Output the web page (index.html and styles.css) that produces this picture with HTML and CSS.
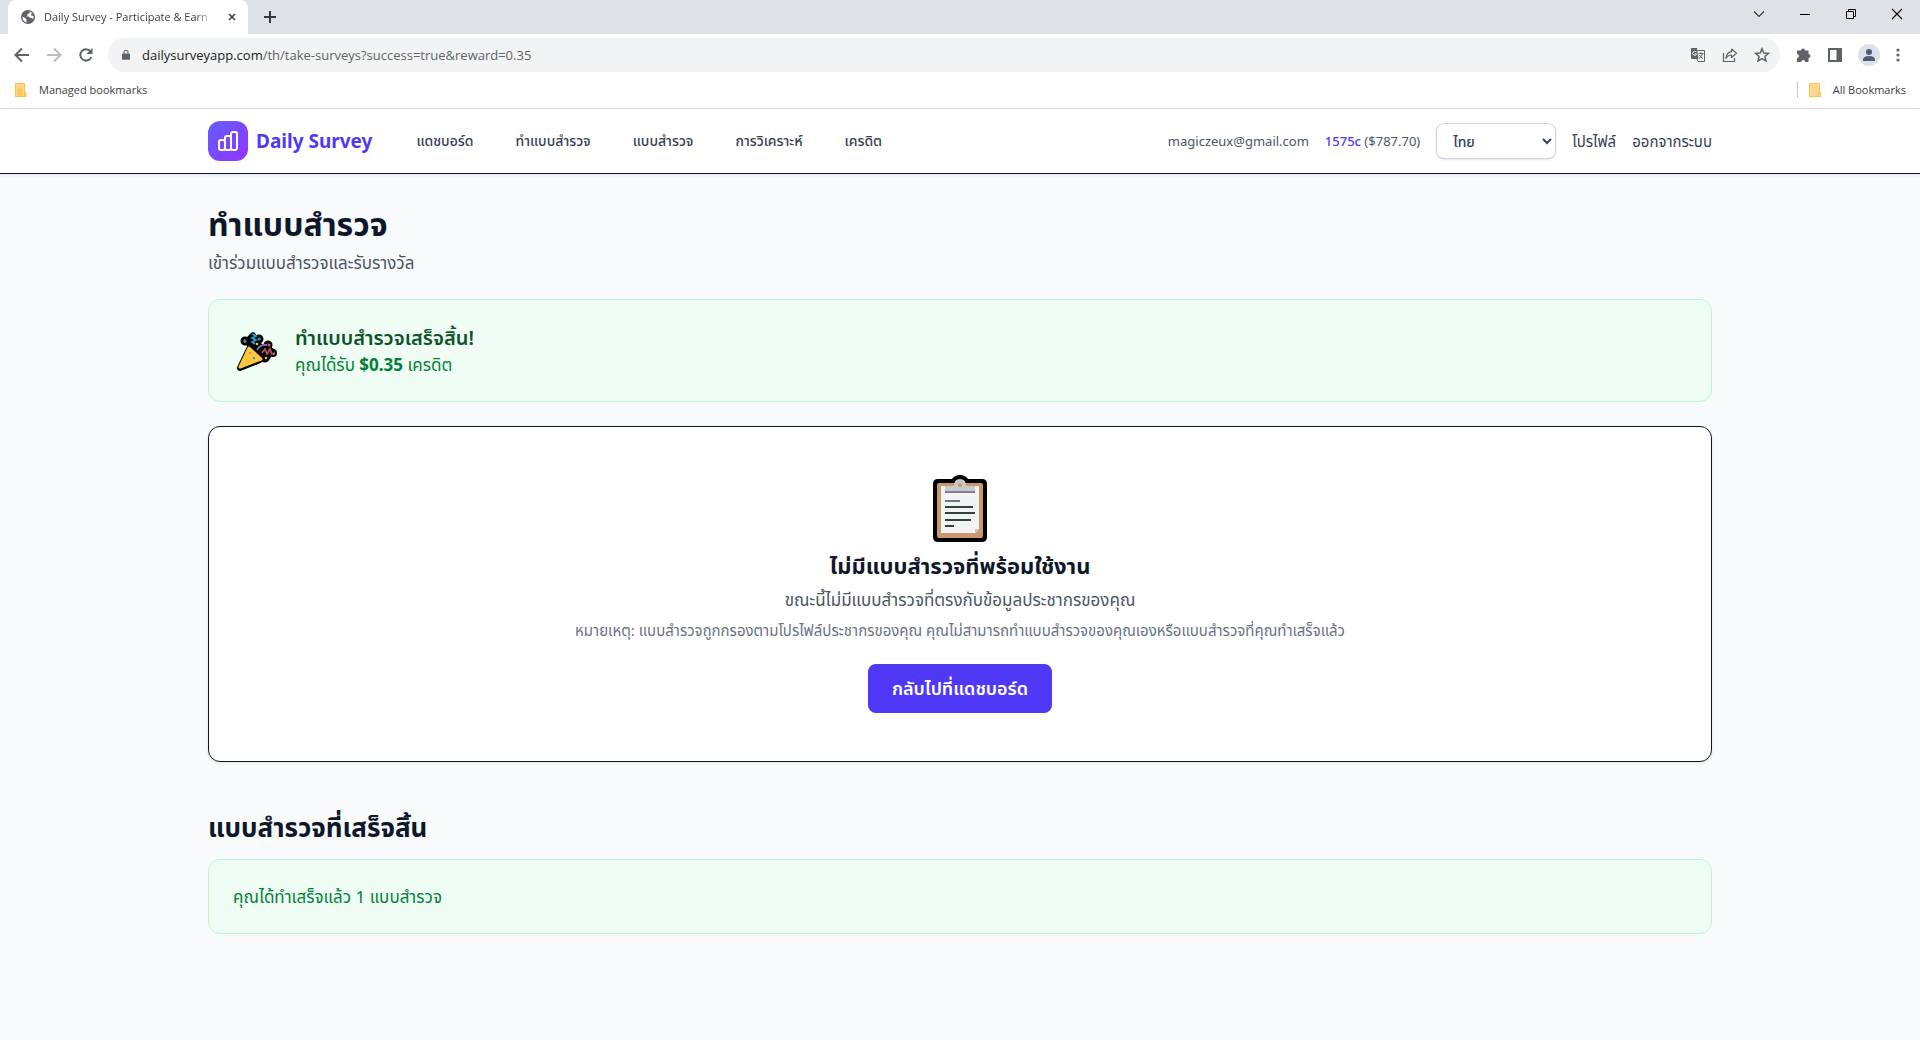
FILE: index.html
```html
<!DOCTYPE html>
<html lang="th">
  <head>
    <meta charset="UTF-8" />
    <meta name="viewport" content="width=device-width, initial-scale=1.0" />
    <title>Daily Survey - Participate &amp; Earn</title>
    <link rel="stylesheet" href="styles.css">
  </head>
  <body>
    <div class="browser" lang="en">
      <div class="tab-strip">
        <div class="tab">
          <svg class="tab-icon" viewBox="0 0 14 14">
            <circle cx="7" cy="7" r="7" fill="#5f6368" />
            <path d="M1.5 6.5 L5.5 9 L5.5 12.6 A6 6 0 0 1 1.5 6.5 Z M6 1.5 L8.8 1.6 L8.5 3.2 L6.6 4 L6.6 5.6 L4.8 6.2 L7.6 6.4 L9.2 8 L11.2 8 L12 9.5 A5.6 5.6 0 0 0 12.5 6 L10 5.5 L10.5 3.5 L12 4.5 A5.6 5.6 0 0 0 6 1.5 Z" fill="#fff" />
          </svg>
          <span class="tab-title">Daily Survey - Participate &amp; Earn</span>
          <button class="icon-btn tab-close" aria-label="Close tab">
            <svg width="8" height="8" viewBox="0 0 8 8"><path d="M1 1 L7 7 M7 1 L1 7" stroke="#3c4043" stroke-width="1.6" /></svg>
          </button>
        </div>
        <button class="icon-btn new-tab" aria-label="New tab">
          <svg width="12" height="12" viewBox="0 0 12 12"><path d="M6 0 V12 M0 6 H12" stroke="#2f3b3c" stroke-width="2" /></svg>
        </button>
        <div class="window-controls">
          <button class="icon-btn" aria-label="Search tabs">
            <svg width="12" height="12" viewBox="0 0 12 12"><path d="M1 3.5 L6 8.5 L11 3.5" fill="none" stroke="#333" stroke-width="1.1" /></svg>
          </button>
          <button class="icon-btn" aria-label="Minimize">
            <svg width="12" height="12" viewBox="0 0 12 12"><path d="M1 6.5 H11" stroke="#000" /></svg>
          </button>
          <button class="icon-btn" aria-label="Restore">
            <svg width="12" height="12" viewBox="0 0 12 12"><path d="M1.5 3.5 H8.5 V10.5 H1.5 Z M3.5 3.5 V1.5 H10.5 V8.5 H8.5" fill="none" stroke="#000" /></svg>
          </button>
          <button class="icon-btn" aria-label="Close">
            <svg width="12" height="12" viewBox="0 0 12 12"><path d="M1 1 L11 11 M11 1 L1 11" stroke="#000" stroke-width="1.1" /></svg>
          </button>
        </div>
      </div>

      <div class="toolbar">
        <button class="icon-btn" aria-label="Back">
          <svg width="16" height="16" viewBox="0 0 16 16"><path d="M8 1.5 L1.5 8 L8 14.5 M1.5 8 H15" fill="none" stroke="#5f6368" stroke-width="2" /></svg>
        </button>
        <button class="icon-btn" aria-label="Forward">
          <svg width="16" height="16" viewBox="0 0 16 16"><path d="M8 1.5 L14.5 8 L8 14.5 M14.5 8 H1" fill="none" stroke="#babcbe" stroke-width="2" /></svg>
        </button>
        <button class="icon-btn" aria-label="Reload">
          <svg width="16" height="16" viewBox="0 0 16 16"><path d="M13.3 10 A5.7 5.7 0 1 1 12.5 4.4" fill="none" stroke="#5f6368" stroke-width="2" /><path d="M14.5 1 V7 H8.5 Z" fill="#5f6368" /></svg>
        </button>
        <div class="omnibox">
          <svg width="8" height="12" viewBox="0 0 10 14"><rect x="0" y="5" width="10" height="8" rx="1" fill="#5f6368" /><path d="M2.5 5.5 V3.5 A2.5 2.5 0 0 1 7.5 3.5 V5.5" fill="none" stroke="#5f6368" stroke-width="1.4" /></svg>
          <p class="url"><span class="host">dailysurveyapp.com</span>/th/take-surveys?success=true&amp;reward=0.35</p>
          <button class="icon-btn" aria-label="Translate">
            <svg width="16" height="16" viewBox="0 0 16 16"><path d="M2 1 H7 L8.5 12 H2 A1 1 0 0 1 1 11 V2 A1 1 0 0 1 2 1 Z" fill="#5f6368" /><path d="M7.5 3.5 H14.5 V14.5 H8 L7 12" fill="none" stroke="#5f6368" /><path d="M6.3 5 A2 2 0 1 0 6.6 7 H4.8" fill="none" stroke="#fff" /><path d="M8.5 6.5 H13.5 M11 5.5 V6.5 M12.5 6.5 Q12 9.5 9 11.5 M9.5 8 Q10.5 10.5 13 11.5" fill="none" stroke="#5f6368" /></svg>
          </button>
          <button class="icon-btn" aria-label="Share">
            <svg width="16" height="16" viewBox="0 0 16 16"><path d="M1.5 6 V14.5 H12.5 V11" fill="none" stroke="#5f6368" stroke-width="1.2" /><path d="M9.5 2 L14.5 6.3 L9.5 10.5 V8 Q6 8 4 11.5 Q4.5 5.5 9.5 4.6 Z" fill="none" stroke="#5f6368" stroke-width="1.2" stroke-linejoin="round" /></svg>
          </button>
          <button class="icon-btn" aria-label="Bookmark this page">
            <svg width="16" height="16" viewBox="0 0 16 16"><path d="M8 1.8 L9.8 6 L14.4 6.4 L10.9 9.4 L12 13.9 L8 11.5 L4 13.9 L5.1 9.4 L1.6 6.4 L6.2 6 Z" fill="none" stroke="#5f6368" stroke-width="1.5" /></svg>
          </button>
        </div>
        <div class="toolbar-actions">
          <button class="icon-btn" aria-label="Extensions">
            <svg width="16" height="16" viewBox="0 0 16 16"><path d="M5 3.5 A2 2 0 0 1 9 3.5 H12.5 V7 A2 2 0 0 1 12.5 11 V15 H9.3 A2 2 0 0 0 5.3 15 H1 V11 A2 2 0 0 0 1 7 V3.5 Z" fill="#5f6368" /></svg>
          </button>
          <button class="icon-btn" aria-label="Side panel">
            <svg width="14" height="14" viewBox="0 0 14 14"><path d="M0 0 H14 V14 H0 Z M2 2 V12 H8.5 V2 Z" fill="#5f6368" fill-rule="evenodd" /></svg>
          </button>
          <button class="icon-btn" aria-label="Profile">
            <svg width="22" height="22" viewBox="0 0 22 22"><circle cx="11" cy="11" r="11" fill="#dee1e6" /><circle cx="11" cy="8" r="3" fill="#4f5b7c" /><path d="M5 17 V15.5 Q5 12 11 12 Q17 12 17 15.5 V17 Z" fill="#4f5b7c" /></svg>
          </button>
          <button class="icon-btn" aria-label="Menu">
            <svg width="4" height="14" viewBox="0 0 4 14"><circle cx="2" cy="2" r="1.6" fill="#5f6368" /><circle cx="2" cy="7" r="1.6" fill="#5f6368" /><circle cx="2" cy="12" r="1.6" fill="#5f6368" /></svg>
          </button>
        </div>
      </div>

      <div class="bookmarks">
        <button class="bookmark">
          <svg width="12" height="14" viewBox="0 0 12 14"><path d="M0.5 0.5 H9.5 V9.5 H11 V13.5 H0.5 Z" fill="#ffd793" stroke="#f9c440" /><path d="M3 6 H7 V12 H3 Z M3 8 H7 M3 10 H7 M5 6 V12 M9.5 9.5 V13" fill="none" stroke="#f9c440" /></svg>
          Managed bookmarks
        </button>
        <button class="bookmark all-bookmarks">
          <svg width="12" height="14" viewBox="0 0 12 14"><path d="M0.5 0.5 H10.5 V9.5 H11.5 V13.5 H0.5 Z" fill="#ffd793" stroke="#f9c440" /><path d="M9.5 13 V9.5 H11" fill="none" stroke="#f9c440" /></svg>
          All Bookmarks
        </button>
      </div>
    </div>

    <header class="site-header">
      <div class="container header-inner">
        <a class="brand" href="#">
          <span class="brand-logo">
            <svg width="24" height="24" viewBox="0 0 24 24" fill="none" stroke="#fff" stroke-width="2" stroke-linecap="round" stroke-linejoin="round"><path d="M9 19v-6a2 2 0 00-2-2H5a2 2 0 00-2 2v6a2 2 0 002 2h2a2 2 0 002-2zm0 0V9a2 2 0 012-2h2a2 2 0 012 2v10m-6 0a2 2 0 002 2h2a2 2 0 002-2m0 0V5a2 2 0 012-2h2a2 2 0 012 2v14a2 2 0 01-2 2h-2a2 2 0 01-2-2z" /></svg>
          </span>
          Daily Survey
        </a>
        <nav class="main-nav">
          <a href="#">แดชบอร์ด</a>
          <a href="#">ทำแบบสำรวจ</a>
          <a href="#">แบบสำรวจ</a>
          <a href="#">การวิเคราะห์</a>
          <a href="#">เครดิต</a>
        </nav>
        <div class="account">
          <span class="email">magiczeux@gmail.com</span>
          <span class="balance"><strong>1575c</strong> ($787.70)</span>
          <select class="language" aria-label="ภาษา">
            <option>ไทย</option>
            <option>English</option>
          </select>
          <a href="#">โปรไฟล์</a>
          <button class="logout">ออกจากระบบ</button>
        </div>
      </div>
    </header>

    <main class="container content">
      <h1>ทำแบบสำรวจ</h1>
      <p class="subtitle">เข้าร่วมแบบสำรวจและรับรางวัล</p>

      <div class="notice reward">
        <svg width="50" height="42" viewBox="0 0 50 42">
          <g stroke="#000" stroke-width="6" stroke-linejoin="round" fill="#000">
            <path d="M16 19 L7 38 L27 30 Z" />
            <path d="M16 16 L14 10 L20 4 L25 11 L28 17 L33 15 L40 21 L35 28 L30 28 Z" stroke-width="4" />
            <circle cx="12" cy="11" r="1.5" />
            <circle cx="26" cy="9" r="1.5" />
            <circle cx="35" cy="15" r="1.5" />
            <circle cx="40" cy="23" r="1" />
            <circle cx="32" cy="28" r="1.5" />
          </g>
          <path d="M16 18 L7 37 L28 29 Z" fill="#fcc63d" stroke="#fcc63d" stroke-width="3" stroke-linejoin="round" />
          <path d="M19 4 l4 2 -4 2 4 2 -4 2 3 2" fill="none" stroke="#2aa7d8" stroke-width="1.6" />
          <path d="M24 20 Q27 14 34 15" fill="none" stroke="#8179c9" stroke-width="1.8" />
          <path d="M29 23 L32 19 L34 24 L37 19 L39 24 L42 23" fill="none" stroke="#b9525b" stroke-width="1.8" />
          <circle cx="12" cy="11" r="1.5" fill="#7770bd" />
          <circle cx="26" cy="9" r="1.5" fill="#2a8fc4" />
          <circle cx="36" cy="15" r="1.5" fill="#d26a50" />
          <circle cx="24" cy="14" r="1.3" fill="#fcc63d" />
          <circle cx="33" cy="28" r="1.3" fill="#f5b83d" />
          <circle cx="17" cy="23" r="1" fill="#c98a35" />
          <circle cx="21" cy="28" r="1.2" fill="#2a9bc8" />
        </svg>
        <div>
          <h3>ทำแบบสำรวจเสร็จสิ้น!</h3>
          <p>คุณได้รับ <strong>$0.35</strong> เครดิต</p>
        </div>
      </div>

      <section class="empty-card">
        <svg width="56" height="70" viewBox="0 1 56 70">
          <path d="M6 5 H20 Q23 1 28 1 Q33 1 36 5 H50 Q55 5 55 10 V63 Q55 68 50 68 H6 Q1 68 1 63 V10 Q1 5 6 5 Z" fill="#000" />
          <rect x="5" y="9" width="46" height="55" rx="2" fill="#c8996c" />
          <path d="M9 12 H47 V55 L43 59 H9 Z" fill="#f2f3f5" />
          <path d="M47 55 H43 V59 Z" fill="#c9cbcf" />
          <path d="M13 19 V12 H22 Q22 5 28 5 Q34 5 34 12 H43 V19 Z" fill="#c7c9cd" />
          <circle cx="28" cy="11" r="2" fill="#c8996c" />
          <path d="M13 18 H43" stroke="#817d91" stroke-width="2" />
          <path d="M13 27 H28" stroke="#6d7580" stroke-width="2" />
          <path d="M13 33 H41 M13 39 H43 M13 46 H39 M13 52 H22" stroke="#2c463c" stroke-width="2" />
        </svg>
        <h2>ไม่มีแบบสำรวจที่พร้อมใช้งาน</h2>
        <p>ขณะนี้ไม่มีแบบสำรวจที่ตรงกับข้อมูลประชากรของคุณ</p>
        <p class="note">หมายเหตุ: แบบสำรวจถูกกรองตามโปรไฟล์ประชากรของคุณ คุณไม่สามารถทำแบบสำรวจของคุณเองหรือแบบสำรวจที่คุณทำเสร็จแล้ว</p>
        <a class="primary-btn" href="#">กลับไปที่แดชบอร์ด</a>
      </section>

      <h2 class="section-title">แบบสำรวจที่เสร็จสิ้น</h2>
      <div class="notice">
        <p>คุณได้ทำเสร็จแล้ว 1 แบบสำรวจ</p>
      </div>
    </main>
  </body>
</html>
```
FILE: styles.css
```css
* {
  box-sizing: border-box;
}
body {
  margin: 0;
  min-height: 100vh;
  font-family: "Noto Sans", "Noto Sans Thai", sans-serif;
  font-size: 17px;
  line-height: 25px;
  color: #0f172b;
  background-color: #f8fafc;
}
h1,
h2,
h3,
p {
  margin: 0;
}
a {
  color: inherit;
  text-decoration: none;
}
button {
  padding: 0;
  border: none;
  background: none;
  font: inherit;
  color: inherit;
  cursor: pointer;
}
svg {
  display: block;
  flex-shrink: 0;
}

/* browser window */
.browser {
  font-family: "Open Sans", sans-serif;
  font-size: 11px;
  line-height: 16px;
  color: #3c4043;
  background-color: #fff;
  border-bottom: 1px solid #dadce0;
}
.icon-btn {
  display: flex;
  align-items: center;
  justify-content: center;
}
.tab-strip {
  display: flex;
  height: 34px;
  padding-left: 8px;
  background-color: #dee1e6;
}
.tab {
  display: flex;
  align-items: center;
  width: 240px;
  padding: 0 8px 0 13px;
  border-radius: 8px 8px 0 0;
  background-color: #fff;
}
.tab-icon {
  width: 14px;
  height: 14px;
  margin-right: 9px;
}
.tab-title {
  flex: 1;
  white-space: nowrap;
  mask-image: linear-gradient(to right, #000 88%, transparent);
}
.tab-close {
  width: 16px;
  margin-left: 8px;
}
.new-tab {
  width: 44px;
}
.window-controls {
  display: flex;
  height: 28px;
  margin-left: auto;
}
.window-controls .icon-btn {
  width: 46px;
}
.toolbar {
  display: flex;
  align-items: center;
  padding: 4px 20px 4px 14px;
  gap: 16px;
}
.omnibox {
  display: flex;
  flex: 1;
  align-items: center;
  height: 34px;
  gap: 16px;
  margin-left: -2px;
  padding: 0 10px 0 14px;
  border-radius: 17px;
  background-color: #f1f3f4;
}
.url {
  flex: 1;
  margin-left: -4px;
  font-size: 13px;
  color: #5f6368;
}
.url .host {
  color: #202124;
}
.toolbar-actions {
  display: flex;
  align-items: center;
  gap: 16px;
}
.bookmarks {
  display: flex;
  align-items: center;
  justify-content: space-between;
  height: 32px;
  padding: 0 14px 4px 15px;
}
.bookmark {
  display: flex;
  align-items: center;
  gap: 12px;
}
.all-bookmarks {
  padding-left: 11px;
  border-left: 1px solid #c4c7cc;
}

/* site header */
.container {
  width: 100%;
  max-width: 1536px;
  margin: 0 auto;
  padding: 0 16px;
}
.site-header {
  font-size: 14px;
  line-height: 20px;
  color: #364153;
  background-color: #fff;
  border-bottom: 1px solid #0f172b;
  box-shadow: 0 1px 3px rgba(0, 0, 0, 0.1);
}
.header-inner {
  display: flex;
  align-items: center;
  height: 64px;
}
.brand {
  display: flex;
  align-items: center;
  gap: 8px;
  font-size: 19px;
  font-weight: 700;
  color: #4f39f6;
}
.brand-logo {
  display: flex;
  align-items: center;
  justify-content: center;
  width: 40px;
  height: 40px;
  border-radius: 12px;
  background: linear-gradient(135deg, #615fff, #9333ff);
}
.main-nav {
  display: flex;
  gap: 42px;
  margin-left: 44px;
  font-weight: 500;
}
.account {
  display: flex;
  align-items: center;
  gap: 16px;
  margin-left: auto;
}
.email,
.balance {
  font-size: 13px;
  color: #4a5565;
}
.balance strong {
  font-weight: 500;
  color: #4f39f6;
}
.language {
  width: 120px;
  height: 36px;
  padding: 0 0 0 12px;
  border: 1px solid #d1d5dc;
  border-radius: 8px;
  font: inherit;
  font-weight: 500;
  color: inherit;
  background-color: #fff;
  box-shadow: 0 1px 2px rgba(0, 0, 0, 0.1);
}
.account a,
.logout {
  font-size: 15px;
}

/* page content */
.content {
  padding-top: 32px;
  padding-bottom: 32px;
}
h1 {
  margin-bottom: 8px;
  font-size: 32px;
  line-height: 36px;
}
.subtitle {
  margin-bottom: 24px;
  color: #4a5565;
}
.notice {
  padding: 24px;
  border: 1px solid #b9f8cf;
  border-radius: 12px;
  color: #008236;
  background-color: #f0fdf4;
}
.reward {
  display: flex;
  align-items: center;
  gap: 12px;
  margin-bottom: 24px;
}
.reward h3 {
  font-size: 20px;
  line-height: 28px;
  font-weight: 600;
  color: #0d542b;
}
.empty-card {
  display: flex;
  flex-direction: column;
  align-items: center;
  padding: 48px;
  border: 1px solid #0f172b;
  border-radius: 12px;
  text-align: center;
  color: #4a5565;
  background-color: #fff;
  box-shadow: 0 1px 3px rgba(0, 0, 0, 0.1);
}
.empty-card h2 {
  margin: 6px 0 8px;
  font-size: 22px;
  line-height: 28px;
  font-weight: 700;
  color: #0f172b;
}
.empty-card .note {
  margin: 8px 0 24px;
  font-size: 15px;
  line-height: 20px;
  color: #6a7282;
}
.primary-btn {
  padding: 12px 24px;
  border-radius: 8px;
  font-size: 18px;
  font-weight: 600;
  color: #fff;
  background-color: #4f39f6;
}
.section-title {
  margin: 48px 0 15px;
  font-size: 26px;
  line-height: 34px;
}
```
